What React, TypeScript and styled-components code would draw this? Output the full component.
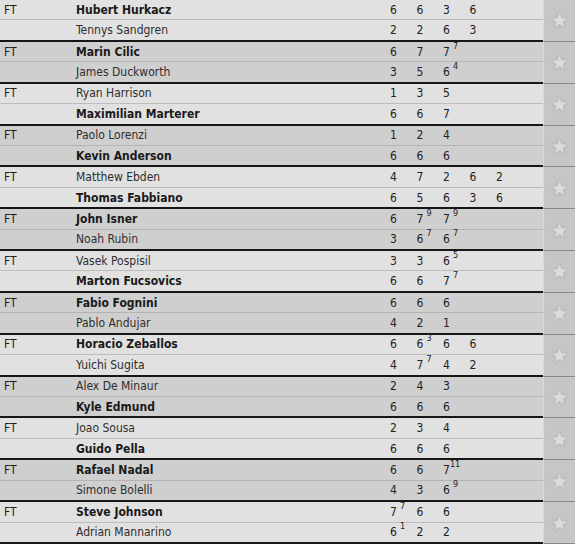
import React from "react";
import styled, { createGlobalStyle } from "styled-components";

type SetScore = { games: string; tiebreak?: string };
type Player = { name: string; winner: boolean; sets: SetScore[] };
type Match = { status: string; players: [Player, Player] };

// "6 7^7 6" -> games with tiebreak superscripts
const sets = (raw: string): SetScore[] =>
  raw.split(" ").map((part) => {
    const [games, tiebreak] = part.split("^");
    return { games, tiebreak };
  });

const p = (name: string, winner: boolean, raw: string): Player => ({ name, winner, sets: sets(raw) });

const matches: Match[] = [
  { status: "FT", players: [p("Hubert Hurkacz", true, "6 6 3 6"), p("Tennys Sandgren", false, "2 2 6 3")] },
  { status: "FT", players: [p("Marin Cilic", true, "6 7 7^7"), p("James Duckworth", false, "3 5 6^4")] },
  { status: "FT", players: [p("Ryan Harrison", false, "1 3 5"), p("Maximilian Marterer", true, "6 6 7")] },
  { status: "FT", players: [p("Paolo Lorenzi", false, "1 2 4"), p("Kevin Anderson", true, "6 6 6")] },
  { status: "FT", players: [p("Matthew Ebden", false, "4 7 2 6 2"), p("Thomas Fabbiano", true, "6 5 6 3 6")] },
  { status: "FT", players: [p("John Isner", true, "6 7^9 7^9"), p("Noah Rubin", false, "3 6^7 6^7")] },
  { status: "FT", players: [p("Vasek Pospisil", false, "3 3 6^5"), p("Marton Fucsovics", true, "6 6 7^7")] },
  { status: "FT", players: [p("Fabio Fognini", true, "6 6 6"), p("Pablo Andujar", false, "4 2 1")] },
  { status: "FT", players: [p("Horacio Zeballos", true, "6 6^3 6 6"), p("Yuichi Sugita", false, "4 7^7 4 2")] },
  { status: "FT", players: [p("Alex De Minaur", false, "2 4 3"), p("Kyle Edmund", true, "6 6 6")] },
  { status: "FT", players: [p("Joao Sousa", false, "2 3 4"), p("Guido Pella", true, "6 6 6")] },
  { status: "FT", players: [p("Rafael Nadal", true, "6 6 7^11"), p("Simone Bolelli", false, "4 3 6^9")] },
  { status: "FT", players: [p("Steve Johnson", true, "7^7 6 6"), p("Adrian Mannarino", false, "6^1 2 2")] },
];

const GlobalStyle = createGlobalStyle`
  html, body {
    margin: 0;
    padding: 0;
    background: #1c1c1c;
  }
  body {
    font-family: "DejaVu Sans Condensed", "DejaVu Sans", sans-serif;
    font-stretch: condensed;
    font-size: 12px;
    color: #2a2a2a;
  }
`;

const Table = styled.div`
  width: 575px;
  display: flex;
  flex-direction: column;
`;

const MatchBlock = styled.div<{ $dark: boolean }>`
  height: 41.846px;
  display: grid;
  grid-template-columns: 543px 32px;
  background: ${({ $dark }) => ($dark ? "#cfcfcf" : "#e1e1e1")};
  --sep: ${({ $dark }) => ($dark ? "#b3b3b3" : "#bdbdbd")};
`;

const Players = styled.div`
  display: flex;
  flex-direction: column;
  border-bottom: 2px solid #161616;
`;

const Row = styled.div`
  flex: 1;
  display: grid;
  grid-template-columns: 72px 314px repeat(5, 26.5px);
  align-items: center;
  padding-left: 4px;
  & + & {
    border-top: 1px solid var(--sep);
  }
`;

const Status = styled.span`
  color: #1e1e1e;
`;

const Name = styled.span<{ $winner: boolean }>`
  font-weight: ${({ $winner }) => ($winner ? "bold" : "normal")};
  color: ${({ $winner }) => ($winner ? "#1a1a1a" : "#2e2e2e")};
  white-space: nowrap;
`;

const Games = styled.span`
  color: #222;
  white-space: nowrap;
`;

const Tiebreak = styled.sup<{ $wide: boolean }>`
  font-size: 9px;
  line-height: 0;
  vertical-align: 7px;
  margin-left: ${({ $wide }) => ($wide ? "0px" : "3px")};
`;

const StarCell = styled.div`
  background: #c6c6c6;
  border-left: 1px solid #d9d9d9;
  border-bottom: 1px solid #888;
  display: flex;
  align-items: center;
  justify-content: center;
`;

const StarIcon = () => (
  <svg width="17" height="16" viewBox="0 0 24 23" style={{ filter: "blur(0.4px) drop-shadow(0 0 1px rgba(0,0,0,0.12))" }}>
    <polygon
      points="12,1 15,8.6 23,9.2 16.9,14.4 18.8,22 12,17.8 5.2,22 7.1,14.4 1,9.2 9,8.6"
      fill="#dcdcdc"
      stroke="#c0c0c0"
      strokeWidth="0.8"
      strokeLinejoin="round"
    />
  </svg>
);

export default function App() {
  return (
    <>
      <GlobalStyle />
      <Table>
        {matches.map((match, i) => (
          <MatchBlock key={i} $dark={i % 2 === 1}>
            <Players>
              {match.players.map((player, j) => (
                <Row key={j}>
                  <Status>{j === 0 ? match.status : ""}</Status>
                  <Name $winner={player.winner}>{player.name}</Name>
                  {player.sets.map((set, k) => (
                    <Games key={k}>
                      {set.games}
                      {set.tiebreak && <Tiebreak $wide={set.tiebreak.length > 1}>{set.tiebreak}</Tiebreak>}
                    </Games>
                  ))}
                </Row>
              ))}
            </Players>
            <StarCell>
              <StarIcon />
            </StarCell>
          </MatchBlock>
        ))}
      </Table>
    </>
  );
}
